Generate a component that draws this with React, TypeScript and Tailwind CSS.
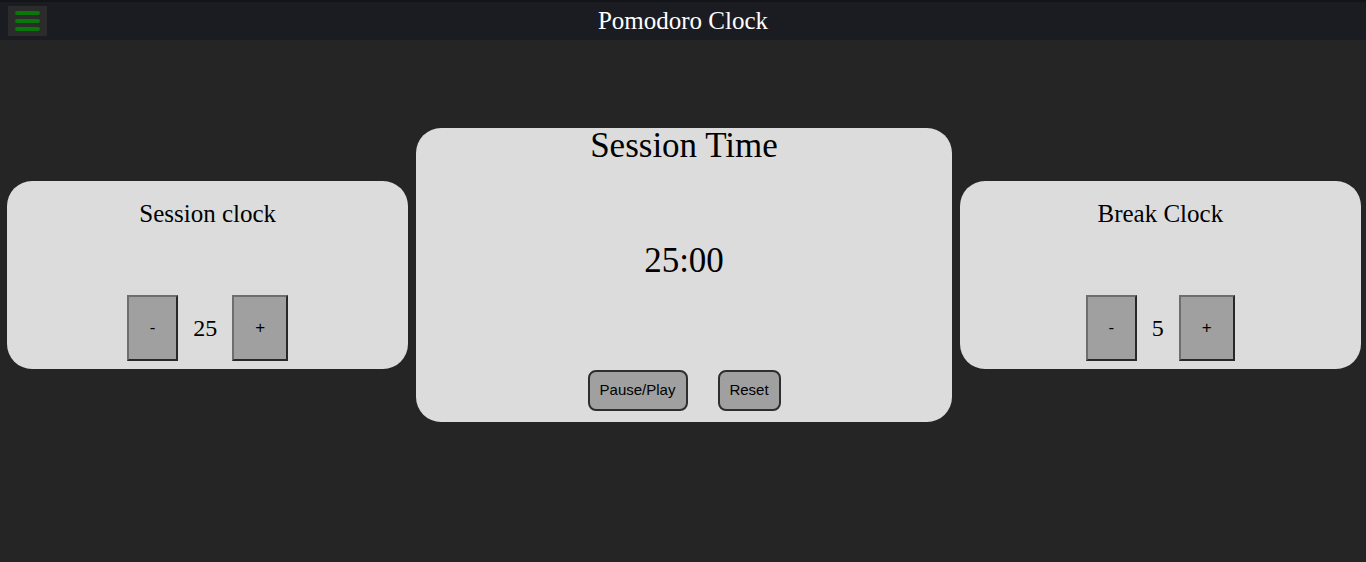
import React from "react";

const serif = { fontFamily: '"Liberation Serif", "Times New Roman", serif' };
const sans = { fontFamily: '"Liberation Sans", Arial, sans-serif' };

function StepButton({ label, w }: { label: string; w: string }) {
  return (
    <button
      className={`${w} h-[66px] bg-[#a0a0a0] border-2 border-t-[#6e6e6e] border-l-[#6e6e6e] border-r-[#282828] border-b-[#282828] text-[17px] text-black flex items-center justify-center`}
      style={sans}
    >
      {label}
    </button>
  );
}

function SideCard({ title, value }: { title: string; value: string }) {
  return (
    <div className="flex-[3] h-[188px] rounded-[25px] bg-[#dcdcdc] flex flex-col items-center">
      <div className="mt-[14px] text-[25px] text-black" style={serif}>
        {title}
      </div>
      <div className="mt-auto mb-[8px] flex items-center">
        <StepButton label="-" w="w-[51px]" />
        <span className="mx-[15px] text-[24px] text-black" style={serif}>
          {value}
        </span>
        <StepButton label="+" w="w-[56px]" />
      </div>
    </div>
  );
}

export default function App() {
  return (
    <div className="min-h-screen bg-[#252525] overflow-hidden">
      <header className="h-[40px] bg-[#1b1c21] border-t-2 border-[#131417] grid grid-cols-[1fr_auto_1fr] items-center">
        <div className="flex">
          <button className="ml-[8px] w-[39px] h-[30px] bg-[#2b2b2b] flex flex-col items-center justify-center gap-[4px]">
            <span className="block w-[25px] h-[4px] rounded-[2px] bg-[#087808]" />
            <span className="block w-[25px] h-[4px] rounded-[2px] bg-[#087808]" />
            <span className="block w-[25px] h-[4px] rounded-[2px] bg-[#087808]" />
          </button>
        </div>
        <h1 className="text-[25px] text-white leading-none -mt-[2px]" style={serif}>
          Pomodoro Clock
        </h1>
        <div />
      </header>
      <main className="flex items-center pl-[7px] pr-[5px] gap-[8px] h-[470px]">
        <SideCard title="Session clock" value="25" />
        <div className="flex-[4] h-[294px] rounded-[25px] bg-[#dcdcdc] flex flex-col items-center">
          <div className="mt-[2px] text-[35px] leading-[32px] text-black" style={serif}>
            Session Time
          </div>
          <div className="mt-[83px] text-[35px] leading-[32px] text-black" style={serif}>
            25:00
          </div>
          <div className="mt-auto mb-[11px] flex gap-[30px]">
            <button
              className="w-[100px] h-[41px] rounded-[8px] bg-[#a0a0a0] border-2 border-[#2e2e2e] text-[15px] text-black"
              style={sans}
            >
              Pause/Play
            </button>
            <button
              className="w-[63px] h-[41px] rounded-[8px] bg-[#a0a0a0] border-2 border-[#2e2e2e] text-[15px] text-black"
              style={sans}
            >
              Reset
            </button>
          </div>
        </div>
        <SideCard title="Break Clock" value="5" />
      </main>
    </div>
  );
}
